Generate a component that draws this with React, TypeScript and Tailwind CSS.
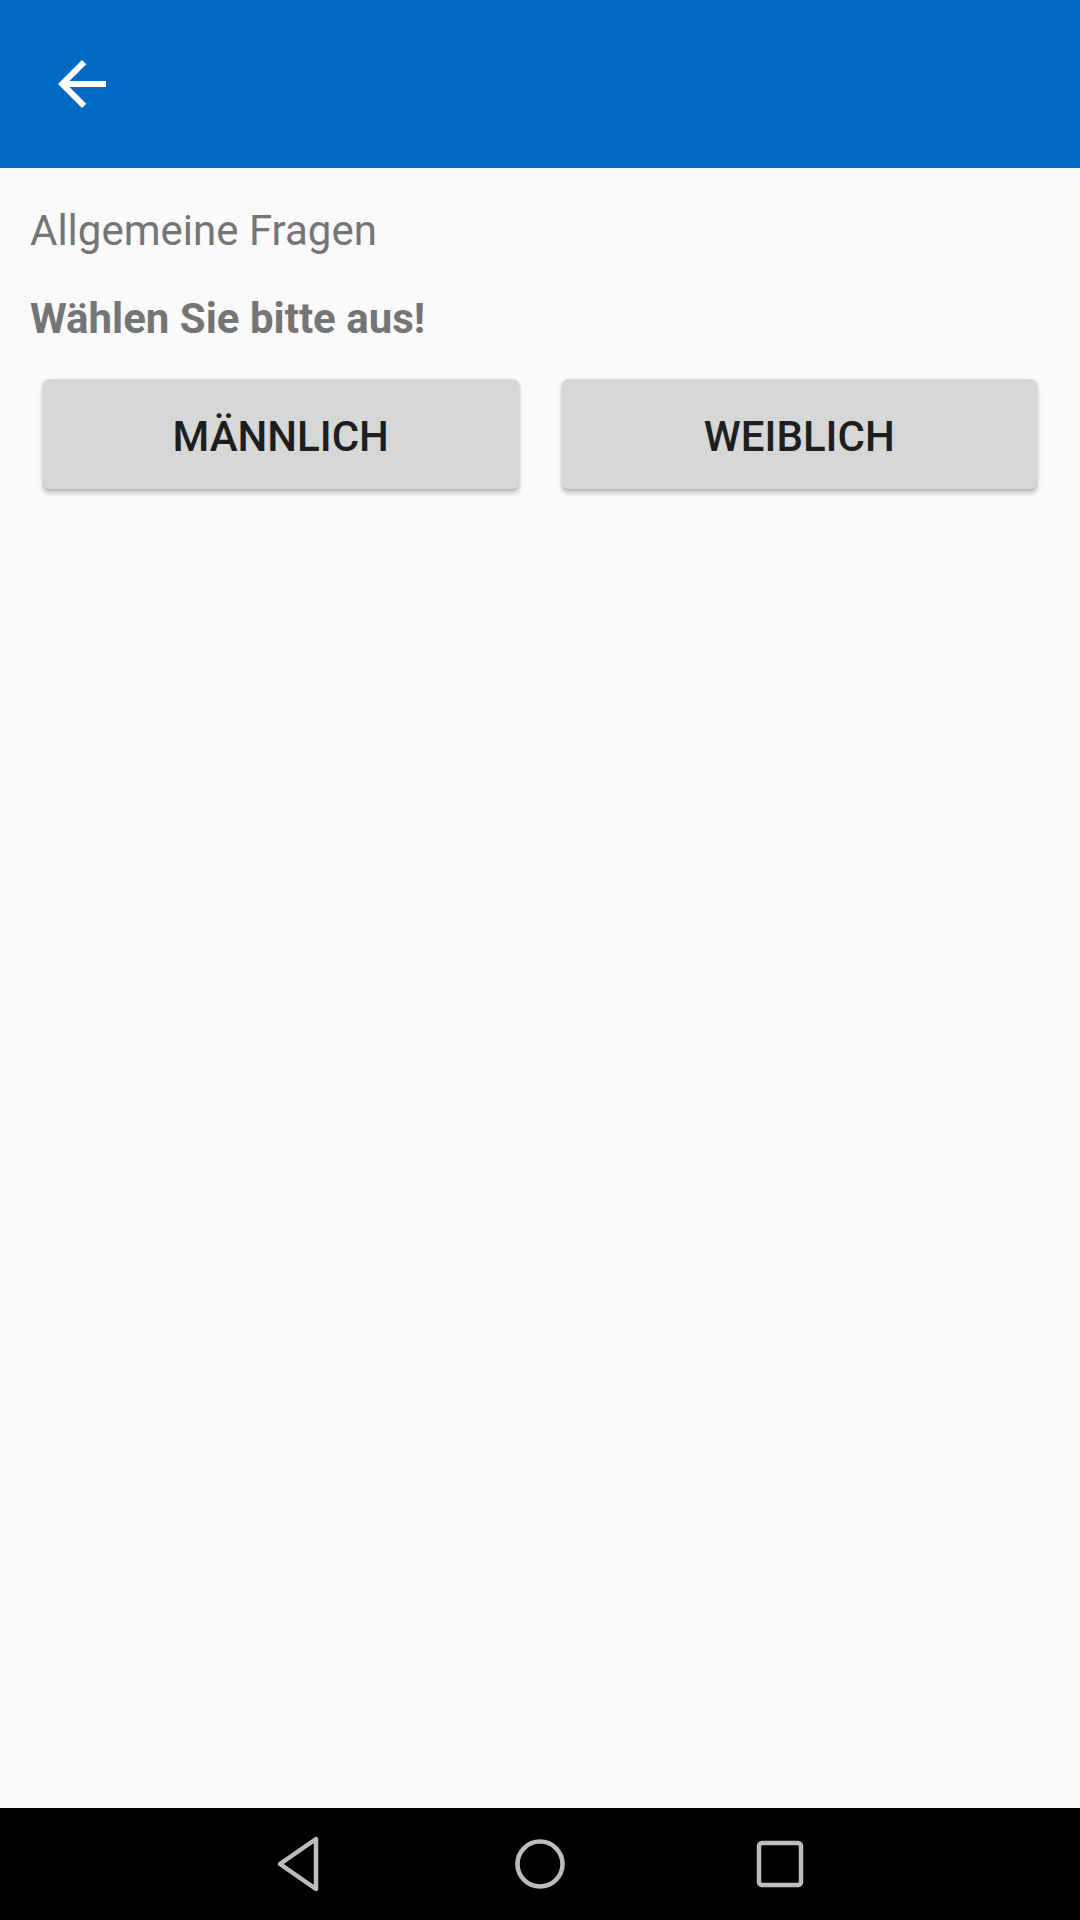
import React from 'react';

const App: React.FC = () => {
  return (
    <div
      className="flex flex-col h-[1920px] w-[1080px] bg-[#fafafa]"
      style={{ fontFamily: 'Roboto, "Noto Sans", sans-serif' }}
    >
      {/* Toolbar */}
      <div className="h-[168px] bg-[#006ac5] flex items-center pl-[46px] shrink-0">
        <svg width="72" height="72" viewBox="0 0 24 24" fill="#ffffff">
          <path d="M20 11H7.83l5.59-5.59L12 4l-8 8 8 8 1.41-1.41L7.83 13H20v-2z" />
        </svg>
      </div>

      {/* Content */}
      <div className="flex-1 flex flex-col">
        <div className="px-[30px] pt-[36px]">
          <p className="text-[42px] leading-[53px] text-[#757575]">Allgemeine Fragen</p>
          <p className="mt-[35px] text-[42px] leading-[53px] font-bold text-[#757575]">Wählen Sie bitte aus!</p>
        </div>
        <div className="mt-[34px] px-[43px] flex gap-[43px]">
          <button className="flex-1 h-[110px] pt-[4px] rounded-[6px] bg-[#d6d7d7] shadow-[0_4px_5px_rgba(0,0,0,0.22),0_1px_3px_rgba(0,0,0,0.12)] text-[42px] font-medium text-[#1e1e1e]">
            MÄNNLICH
          </button>
          <button className="flex-1 h-[110px] pt-[4px] rounded-[6px] bg-[#d6d7d7] shadow-[0_4px_5px_rgba(0,0,0,0.22),0_1px_3px_rgba(0,0,0,0.12)] text-[42px] font-medium text-[#1e1e1e]">
            WEIBLICH
          </button>
        </div>
      </div>

      {/* System navigation bar */}
      <div className="h-[112px] bg-black shrink-0 flex items-center justify-center">
        <div className="w-[240px] flex justify-center">
          <svg width="60" height="60" viewBox="0 0 60 60" fill="none" stroke="#bdbdbd" strokeWidth="4.5" strokeLinejoin="round">
            <path d="M46 5 L46 55 L10 30 Z" />
          </svg>
        </div>
        <div className="w-[240px] flex justify-center">
          <svg width="60" height="60" viewBox="0 0 60 60" fill="none" stroke="#bdbdbd" strokeWidth="4.5">
            <circle cx="30" cy="30" r="22.5" />
          </svg>
        </div>
        <div className="w-[240px] flex justify-center">
          <svg width="60" height="60" viewBox="0 0 60 60" fill="none" stroke="#bdbdbd" strokeWidth="4.5">
            <rect x="9" y="9" width="42" height="42" rx="3" />
          </svg>
        </div>
      </div>
    </div>
  );
};

export default App;
